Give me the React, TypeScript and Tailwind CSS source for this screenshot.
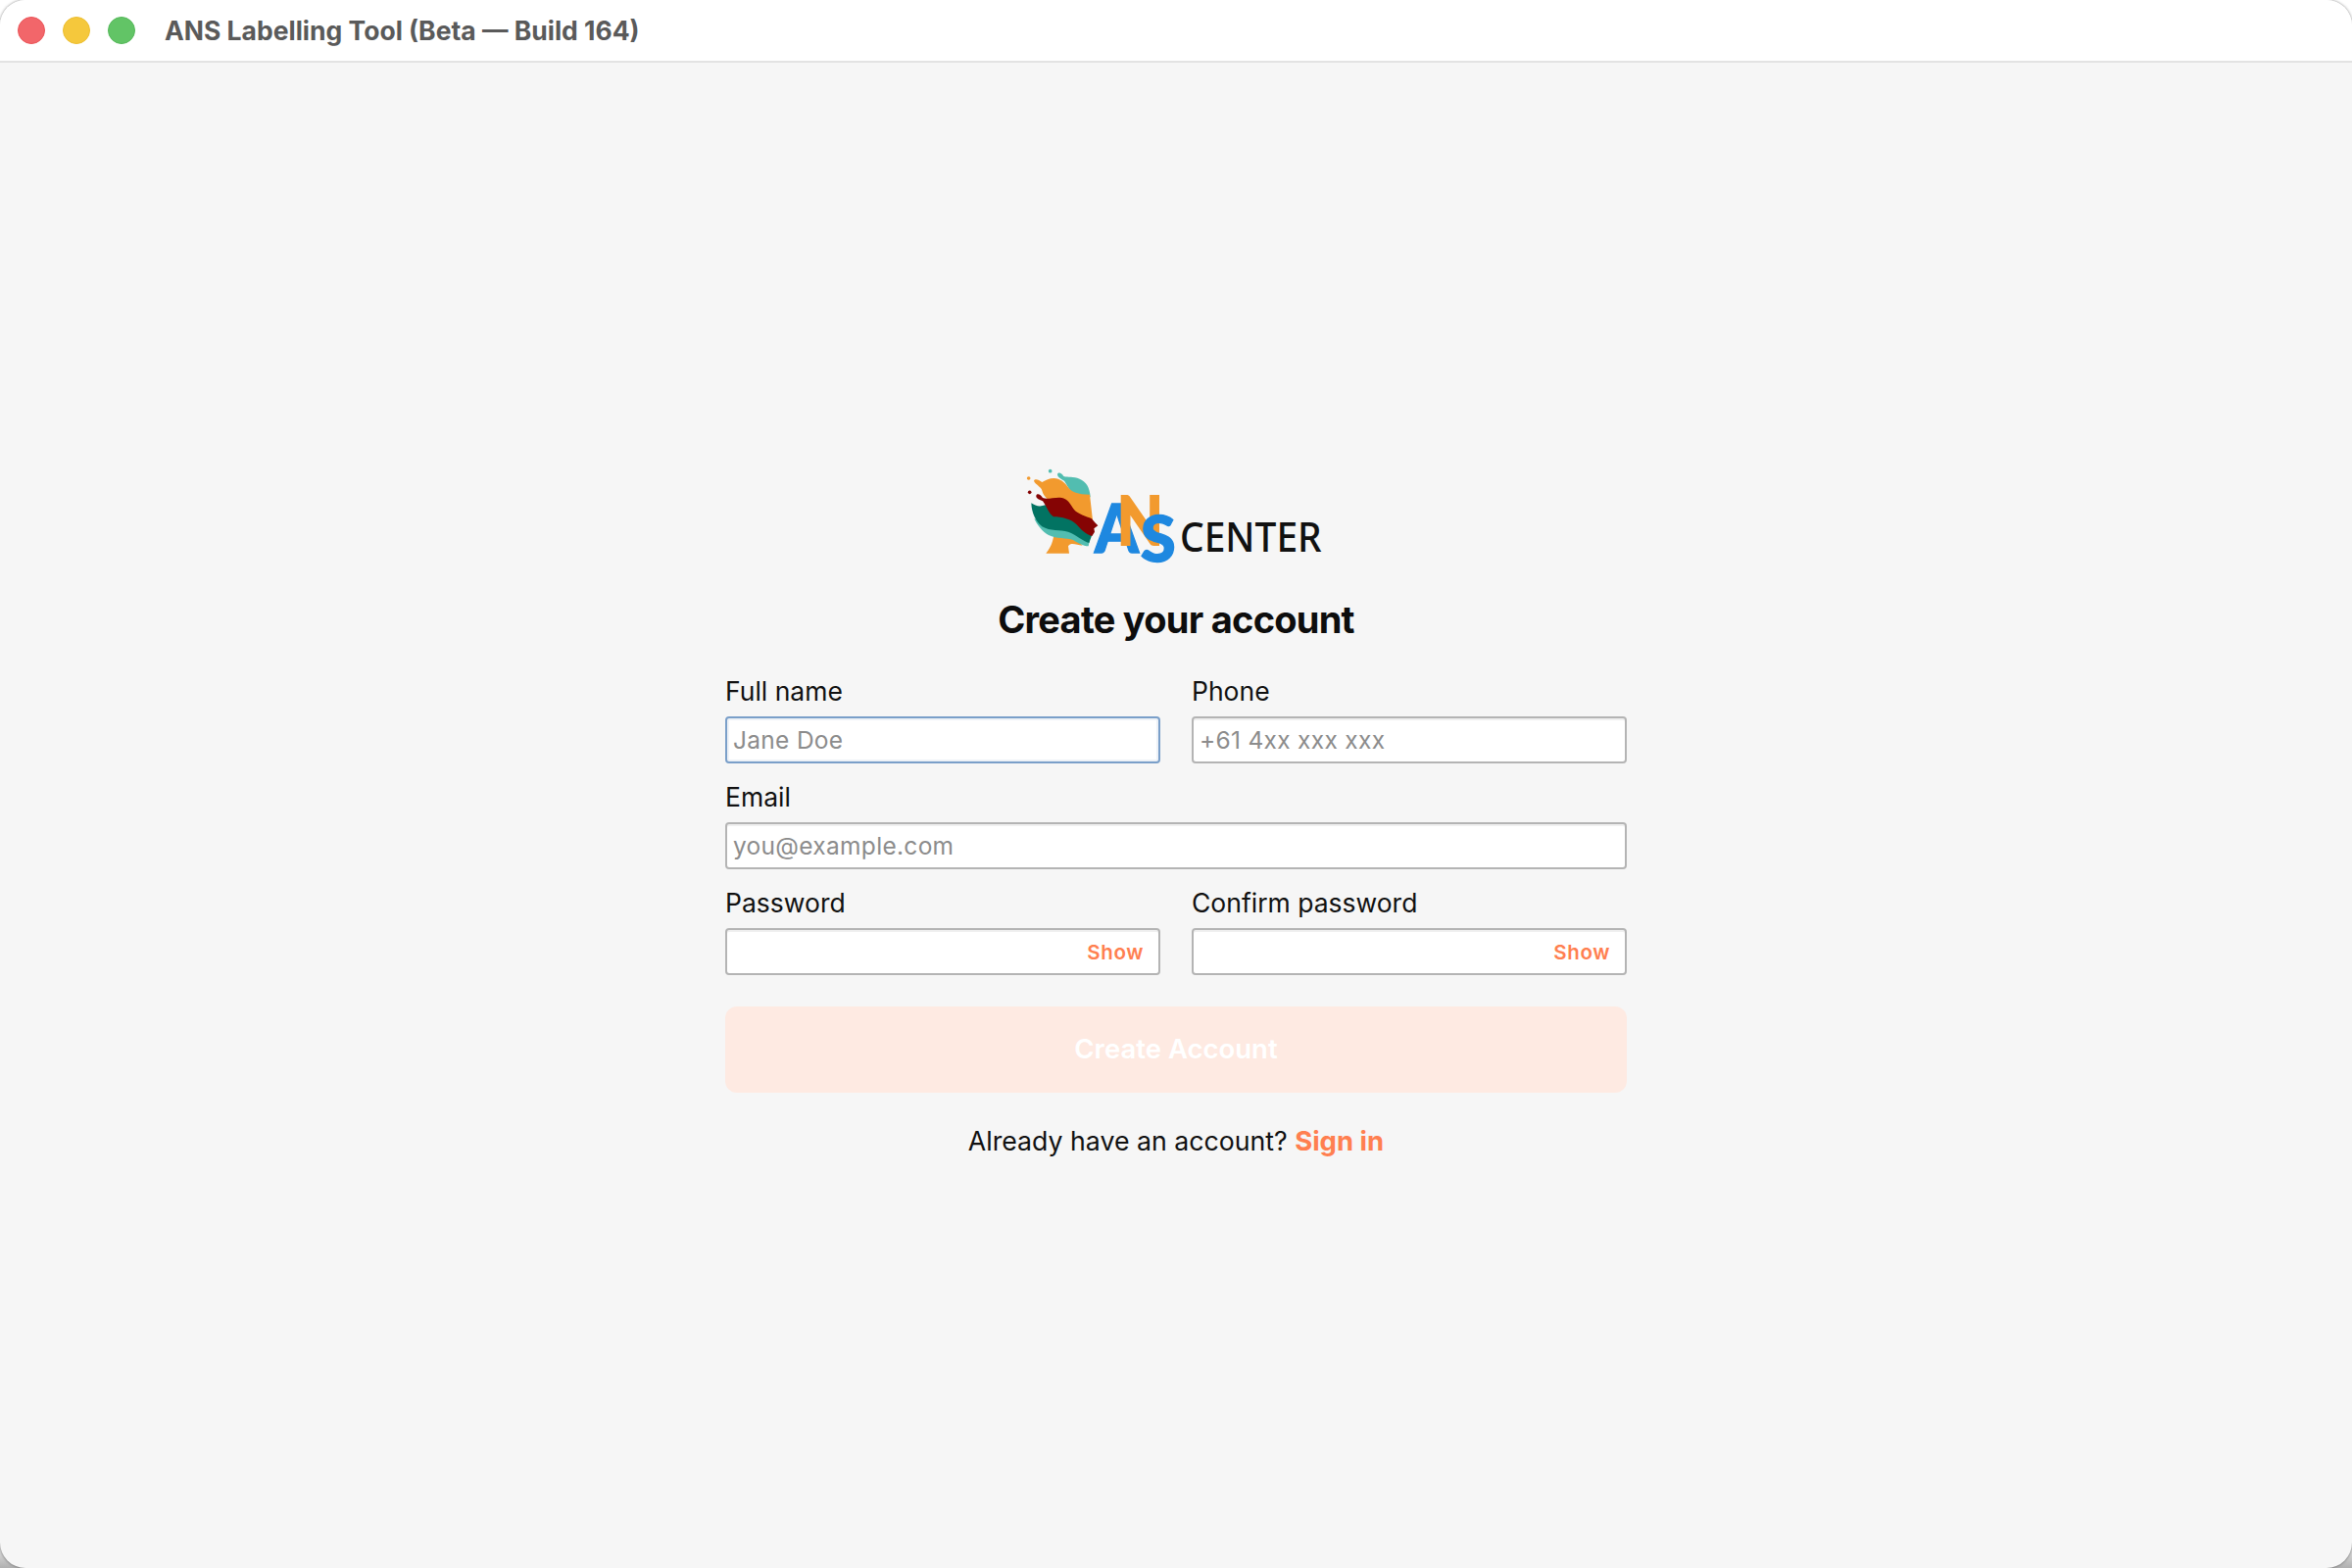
const Logo = () => (
  <svg viewBox="0 0 960 330" className="block w-[320px] h-[110px] mx-auto">
    <circle cx="29" cy="42" r="5.5" fill="#f29a2e" />
    <circle cx="95" cy="20" r="5.5" fill="#52bdb0" />
    <circle cx="32" cy="85" r="5.5" fill="#850404" />
    <path d="M117 30 C120 22 130 26 136 36 C150 40 165 36 185 44 C205 52 216 70 218 100 L170 100 C155 80 150 68 138 50 C128 44 118 40 117 30 Z" fill="#52bdb0" />
    <path d="M45 50 C48 42 60 46 70 54 C82 48 92 42 106 42 C125 42 140 55 150 70 C160 85 180 92 216 92 L226 180 L170 170 L100 120 C85 102 75 98 70 80 C68 68 50 62 45 50 Z" fill="#f29a2e" />
    <path d="M106 215 L165 215 L194 248 C175 246 158 236 150 250 L153 272 L82 272 C92 258 102 245 106 215 Z" fill="#f29a2e" />
    <path d="M46 165 L110 190 L170 200 L216 232 L212 250 C195 250 180 240 165 231 C145 224 115 228 90 216 C70 205 55 185 46 165 Z" fill="#52bdb0" />
    <path d="M37 118 C50 128 65 130 80 124 L110 140 L180 160 L224 212 L214 240 C195 235 175 215 150 206 C125 200 95 205 70 190 C52 175 38 150 37 118 Z" fill="#027362" />
    <path d="M52 95 C55 86 66 92 72 102 C85 108 105 100 125 101 C150 104 155 120 168 138 C180 152 205 158 222 166 L232 178 L241 187 L229 196 L231 206 L223 219 C205 215 190 200 175 183 C160 168 130 160 105 160 C90 150 85 130 72 112 C62 106 50 105 52 95 Z" fill="#850404" />
    <text x="231" y="270" className="font-[Lato,sans-serif] font-black" fontSize="206" fill="#1e88e0" stroke="#1e88e0" strokeWidth="4" textLength="135" lengthAdjust="spacingAndGlyphs">A</text>
    <text x="300" y="245" className="font-[Lato,sans-serif] font-black" fontSize="206" fill="#f29a2e" stroke="#f29a2e" strokeWidth="6" textLength="140" lengthAdjust="spacingAndGlyphs">N</text>
    <text x="371" y="298" className="font-[Lato,sans-serif] font-black" fontSize="196" fill="#1e88e0" stroke="#1e88e0" strokeWidth="4">S</text>
    <text x="492" y="268" className="font-['Noto_Sans',sans-serif] font-medium" fontSize="126" fill="#111111" textLength="434" lengthAdjust="spacingAndGlyphs">CENTER</text>
  </svg>
);

const Field = ({ label, placeholder, focused, toggle }: { label: string; placeholder?: string; focused?: boolean; toggle?: boolean }) => (
  <div>
    <label className="block text-[26.5px] leading-[42px] mt-[1px] mb-[5px] text-[#111111]">{label}</label>
    <div className="relative">
      <input
        readOnly
        placeholder={placeholder}
        className={
          focused
            ? "block w-full h-[48px] bg-white rounded-[4px] border-2 border-[#7a9fc9] shadow-[inset_0_0_0_2px_#eef2f7] px-[6px] text-[24.5px] tracking-[0.3px] outline-none placeholder:text-[#8c8c8c]"
            : "block w-full h-[48px] bg-white rounded-[4px] border-2 border-[#b4b4b4] shadow-[inset_0_2px_0_#f0f0f0] px-[6px] text-[24.5px] tracking-[0.3px] outline-none placeholder:text-[#8c8c8c]"
        }
      />
      {toggle && (
        <span className="absolute right-[17px] top-[13px] text-[20.5px] leading-[24px] font-semibold tracking-[0.6px] text-[#ff7f50]">Show</span>
      )}
    </div>
  </div>
);

export default function App() {
  return (
    <div className="w-[2400px] h-[1600px] bg-[linear-gradient(to_bottom,#ffffff_98%,#b0b0b0_100%)] font-[Inter,sans-serif]">
      <div className="h-full flex flex-col overflow-hidden rounded-[26px] bg-[#f6f6f6] shadow-[0_0_3px_rgba(0,0,0,0.5)]">
        <header className="h-[64px] shrink-0 flex items-center bg-white border-b-2 border-[#e3e3e3] pl-[18px]">
          <div className="flex gap-[18px]">
            <span className="w-[28px] h-[28px] rounded-full bg-[#f2666a] border border-[#ea5458]" />
            <span className="w-[28px] h-[28px] rounded-full bg-[#f5c83c] border border-[#ecbe30]" />
            <span className="w-[28px] h-[28px] rounded-full bg-[#62c466] border border-[#55b85a]" />
          </div>
          <h1 className="ml-[30px] mt-[1px] text-[26.5px] font-bold text-[#5a5a5a]">ANS Labelling Tool (Beta — Build 164)</h1>
        </header>
        <main className="flex-1 pt-[410px]">
          <div className="w-[920px] mx-auto">
            <Logo />
            <h2 className="mt-[24px] mb-[27px] text-center text-[38px] leading-[48px] font-bold tracking-[-0.75px] text-[#0d0d0d]">Create your account</h2>
            <div className="grid grid-cols-2 gap-x-[32px] gap-y-[12px]">
              <Field label="Full name" placeholder="Jane Doe" focused />
              <Field label="Phone" placeholder="+61 4xx xxx xxx" />
              <div className="col-span-2">
                <Field label="Email" placeholder="you@example.com" />
              </div>
              <Field label="Password" toggle />
              <Field label="Confirm password" toggle />
            </div>
            <button className="block w-full h-[88px] mt-[32px] rounded-[12px] bg-[#feeae2] text-[27.5px] font-semibold text-white">Create Account</button>
            <p className="mt-[31px] text-center text-[26.7px] leading-[36px] text-[#111111]">
              Already have an account? <a className="text-[27.5px] font-bold text-[#ff7f50]">Sign in</a>
            </p>
          </div>
        </main>
      </div>
    </div>
  );
}
